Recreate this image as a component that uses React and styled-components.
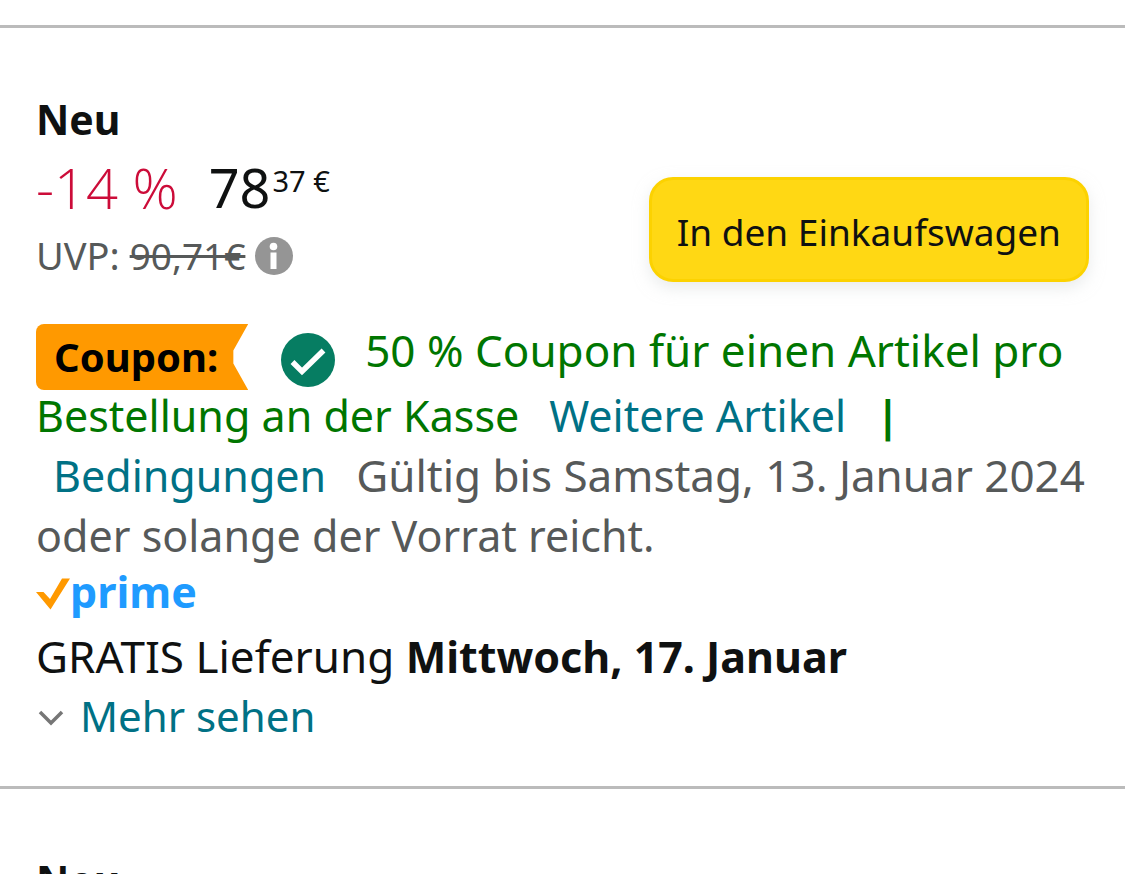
import React, { useState } from 'react';
import styled, { createGlobalStyle } from 'styled-components';

const colors = {
  text: '#0f1111',
  gray: '#565959',
  red: '#cc0c39',
  green: '#007600',
  link: '#007185',
  border: '#bbbbbb',
  yellow: '#ffd814',
  orange: '#ff9900'
};

const GlobalStyle = createGlobalStyle`
  * {
    box-sizing: border-box;
  }

  body {
    margin: 0;
    background: #fff;
    color: ${colors.text};
    font-family: 'Noto Sans', 'Open Sans', sans-serif;
    font-size: 43px;
    line-height: 60px;
  }
`;

const Page = styled.main`
  height: 100vh;
  overflow: hidden;
  padding-top: 25px;
`;

const Offer = styled.section`
  border-top: 3px solid ${colors.border};
  padding: 61px 36px 40px;
`;

const Condition = styled.h2`
  margin: 0;
  font-size: 41px;
  font-weight: 700;
  line-height: 60px;
`;

const Summary = styled.div`
  display: flex;
  align-items: flex-end;
  justify-content: space-between;
  height: 133px;
  margin-bottom: 39px;
`;

const Prices = styled.div`
  align-self: flex-start;
`;

const PriceRow = styled.div`
  display: flex;
  align-items: center;
  gap: 31px;
  font-size: 54px;
  line-height: 76px;
`;

const Discount = styled.span`
  color: ${colors.red};
  font-family: 'Open Sans', 'Noto Sans', sans-serif;
  font-size: 56px;
  font-weight: 300;
`;

const Price = styled.span`
  display: flex;
  align-items: flex-start;
  gap: 2px;
`;

const Cents = styled.span`
  font-size: 29px;
  line-height: 64px;
`;

const ListPrice = styled.div`
  display: flex;
  align-items: center;
  gap: 10px;
  color: ${colors.gray};
  font-size: 38px;
  line-height: 60px;

  s {
    font-size: 37px;
  }
`;

const InfoButton = styled.button`
  display: flex;
  padding: 0;
  border: 0;
  background: none;
  cursor: pointer;
`;

const CartButton = styled.button`
  height: 105px;
  padding: 4px 25px 0;
  border: 3px solid #fcd200;
  border-radius: 24px;
  background: ${colors.yellow};
  box-shadow: 0 6px 15px rgba(213, 217, 217, 0.5);
  color: ${colors.text};
  font-family: inherit;
  font-size: 37px;
  line-height: 52px;
  white-space: nowrap;
  cursor: pointer;
`;

const Promotion = styled.p`
  margin: 0;
  color: ${colors.green};
`;

const CouponLine = styled.span`
  display: flex;
  align-items: flex-start;
  height: 65px;
  font-size: 44px;
  line-height: 58px;
`;

const CouponBadge = styled.strong`
  height: 66px;
  margin-top: 3px;
  padding: 0 30px 0 18px;
  border-radius: 8px 0 0 8px;
  background: ${colors.orange};
  clip-path: polygon(0 0, 100% 0, 93% 40%, 93% 60%, 100% 100%, 0 100%);
  color: #000;
  font-size: 40px;
  line-height: 66px;
`;

const CheckIcon = styled.svg`
  margin: 12px 30px 0 33px;
  flex: none;
`;

const Link = styled.a`
  margin-left: ${props => props.$indent || 0}px;
  color: ${colors.link};
  text-decoration: none;
`;

const Gap = styled.span`
  display: inline-block;
  width: 30px;
`;

const Validity = styled.span`
  color: ${colors.gray};
`;

const ValidUntil = styled.span`
  font-size: 44px;
  line-height: 58px;
`;

const Prime = styled.div`
  display: flex;
  align-items: flex-start;
  height: 60px;
  color: #1f9bff;
  font-weight: 700;
  line-height: 52px;
`;

const PrimeCheck = styled.svg`
  margin-top: 12px;
  flex: none;
`;

const Delivery = styled.div`
  font-size: 44px;

  strong {
    font-size: 43px;
    line-height: 56px;
  }
`;

const MoreButton = styled.button`
  display: flex;
  align-items: center;
  gap: 14px;
  padding: 0;
  border: 0;
  background: none;
  color: ${colors.link};
  font-family: inherit;
  font-size: 42px;
  line-height: 60px;
  cursor: pointer;
`;

const App = () => {
  const [open, setOpen] = useState(false);

  return (
    <>
      <GlobalStyle />
      <Page>
        <Offer>
          <Condition>Neu</Condition>
          <Summary>
            <Prices>
              <PriceRow>
                <Discount>-14 %</Discount>
                <Price>
                  78<Cents>37 €</Cents>
                </Price>
              </PriceRow>
              <ListPrice>
                <span>
                  UVP: <s>90,71€</s>
                </span>
                <InfoButton type="button" aria-label="Info zur UVP">
                  <svg width="38" height="38" viewBox="0 0 38 38">
                    <circle cx="19" cy="19" r="19" fill="#959595" />
                    <circle cx="18.5" cy="9.5" r="3.8" fill="#fff" />
                    <path d="M15.5 15.5H21.5V32H15.5Z" fill="#fff" />
                  </svg>
                </InfoButton>
              </ListPrice>
            </Prices>
            <CartButton type="button">In den Einkaufswagen</CartButton>
          </Summary>

          <Promotion>
            <CouponLine>
              <CouponBadge>Coupon:</CouponBadge>
              <CheckIcon width="54" height="54" viewBox="0 0 54 54">
                <circle cx="27" cy="27" r="27" fill="#067d62" />
                <path
                  d="M11.5 29L21 38.5L42.5 17.5"
                  fill="none"
                  stroke="#fff"
                  strokeWidth="5.5"
                />
              </CheckIcon>
              <span>50 % Coupon für einen Artikel pro</span>
            </CouponLine>
            Bestellung an der Kasse
            <Gap />
            <Link href="#artikel">Weitere Artikel</Link>
            <Gap />
            <strong>|</strong>{' '}
            <Link href="#bedingungen" $indent={17}>
              Bedingungen
            </Link>
            <Gap />
            <Validity>
              <ValidUntil>Gültig bis Samstag, 13. Januar 2024</ValidUntil>{' '}
              oder solange der Vorrat reicht.
            </Validity>
          </Promotion>

          <Prime>
            <PrimeCheck width="34" height="32" viewBox="0 0 34 32">
              <path
                d="M0 14H7.5L14 21L26 0.5H34L14.5 31.5Z"
                fill={colors.orange}
              />
            </PrimeCheck>
            prime
          </Prime>
          <Delivery>
            GRATIS Lieferung <strong>Mittwoch, 17. Januar</strong>
          </Delivery>
          <MoreButton
            type="button"
            aria-expanded={open}
            onClick={() => setOpen(!open)}
          >
            <svg width="30" height="24" viewBox="0 0 30 24">
              <path
                d="M4 8L15 19L26 8"
                fill="none"
                stroke="#767676"
                strokeWidth="3.5"
              />
            </svg>
            Mehr sehen
          </MoreButton>
        </Offer>

        <Offer>
          <Condition>Neu</Condition>
        </Offer>
      </Page>
    </>
  );
};

export default App;
